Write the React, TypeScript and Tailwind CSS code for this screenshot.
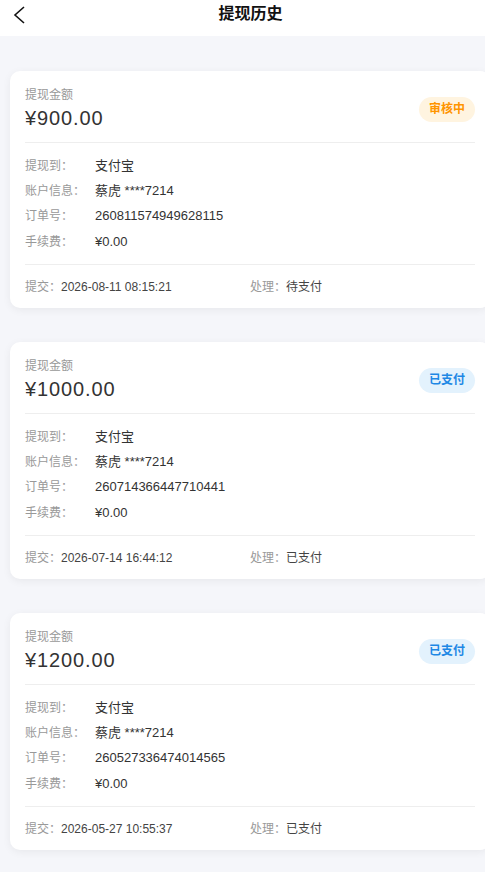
const records = [
  {
    amount: "¥900.00",
    status: "审核中",
    tone: "orange",
    method: "支付宝",
    account: "蔡虎 ****7214",
    order: "260811574949628115",
    fee: "¥0.00",
    submitted: "2026-08-11 08:15:21",
    handled: "待支付",
  },
  {
    amount: "¥1000.00",
    status: "已支付",
    tone: "blue",
    method: "支付宝",
    account: "蔡虎 ****7214",
    order: "260714366447710441",
    fee: "¥0.00",
    submitted: "2026-07-14 16:44:12",
    handled: "已支付",
  },
  {
    amount: "¥1200.00",
    status: "已支付",
    tone: "blue",
    method: "支付宝",
    account: "蔡虎 ****7214",
    order: "260527336474014565",
    fee: "¥0.00",
    submitted: "2026-05-27 10:55:37",
    handled: "已支付",
  },
];

type Record = (typeof records)[number];

function Row({ label, value }: { label: string; value: string }) {
  return (
    <div className="flex h-[25.3px] items-center text-[12px]">
      <div className="w-[70px] shrink-0 text-[#999]">{label}</div>
      <div className="text-[13px] text-[#333]">{value}</div>
    </div>
  );
}

function RecordCard({ r }: { r: Record }) {
  const badge =
    r.tone === "orange"
      ? "bg-[#fff4e0] text-[#ff9500]"
      : "bg-[#e3f2fd] text-[#1e88e5]";
  return (
    <div className="ml-[10px] h-[237px] w-[480px] shrink-0 rounded-[10px] bg-white px-[15px] pt-[15px] shadow-[0_2px_8px_rgba(0,0,0,0.06)]">
      <div className="flex items-center justify-between border-b border-[#eee] pb-[10px]">
        <div>
          <div className="text-[12px] leading-[18px] text-[#999]">提现金额</div>
          <div className="text-[20px] leading-[28px] tracking-[0.9px] text-[#333]">{r.amount}</div>
        </div>
        <div className={`flex h-[25px] w-[56px] items-center justify-center rounded-full text-[12px] font-bold ${badge}`}>
          {r.status}
        </div>
      </div>
      <div className="border-b border-[#eee] py-[10px]">
        <Row label="提现到：" value={r.method} />
        <Row label="账户信息：" value={r.account} />
        <Row label="订单号：" value={r.order} />
        <Row label="手续费：" value={r.fee} />
      </div>
      <div className="grid h-[43px] grid-cols-2 items-center text-[12px]">
        <div>
          <span className="text-[#999]">提交：</span>
          <span className="text-[#444]">{r.submitted}</span>
        </div>
        <div>
          <span className="text-[#999]">处理：</span>
          <span className="text-[#444]">{r.handled}</span>
        </div>
      </div>
    </div>
  );
}

export default function App() {
  return (
    <div
      className="min-h-[872px] w-[485px] overflow-hidden bg-[#f5f6fa]"
      style={{ fontFamily: '"Liberation Sans", "Noto Sans CJK SC", sans-serif' }}
    >
      <div className="relative flex h-[36px] justify-center bg-white pl-[16px] pt-[4px]">
        <svg
          className="absolute left-[13px] top-[6px]"
          width="12"
          height="18"
          viewBox="0 0 12 18"
          fill="none"
          stroke="#111"
          strokeWidth="1.6"
        >
          <polyline points="11,1 2,9 11,17" />
        </svg>
        <div className="text-[16px] font-bold leading-[20px] text-[#111]">提现历史</div>
      </div>
      <div className="flex flex-col gap-[34px] pt-[35px] pb-[20px]">
        {records.map((r) => (
          <RecordCard key={r.order} r={r} />
        ))}
      </div>
    </div>
  );
}
